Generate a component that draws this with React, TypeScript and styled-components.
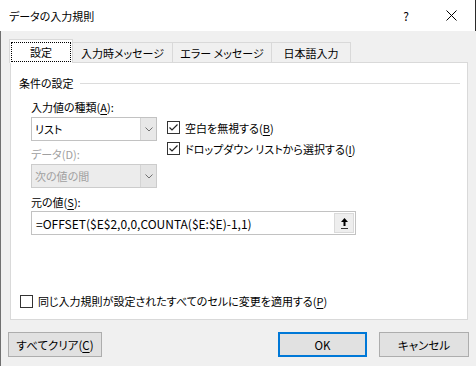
import styled, { createGlobalStyle } from 'styled-components';

const GlobalStyle = createGlobalStyle`
  html, body {
    margin: 0;
    padding: 0;
    background: #f0f0f0;
  }
  body {
    font-family: "Noto Sans CJK JP", "Noto Sans", sans-serif;
    font-size: 11px;
    color: #000;
    font-feature-settings: "palt";
  }
  * {
    box-sizing: border-box;
  }
`;

const Window = styled.div`
  width: 476px;
  height: 366px;
  display: flex;
  flex-direction: column;
  overflow: hidden;
`;

const TitleBar = styled.div`
  height: 31px;
  flex-shrink: 0;
  background: #fff;
  border-right: 1px solid #2b2b2b;
  display: flex;
  align-items: center;
  padding-left: 9px;
`;

const Title = styled.span`
  flex: 1;
  font-size: 11px;
`;

const HelpMark = styled.span`
  font-size: 12px;
  margin-right: 37px;
`;

const CloseMark = styled.svg`
  margin-right: 18px;
`;

const Body = styled.div`
  flex: 1;
  background: #f0f0f0;
  border-left: 1px solid #707070;
  padding: 8px 7px 0 8px;
  display: flex;
  flex-direction: column;
`;

const TabStrip = styled.div`
  display: flex;
  align-items: flex-end;
  height: 24px;
  margin-bottom: -1px;
  position: relative;
  z-index: 1;
`;

const Tab = styled.div<{ $active?: boolean; $width: number }>`
  width: ${p => p.$width}px;
  height: ${p => (p.$active ? 24 : 20)}px;
  margin-bottom: ${p => (p.$active ? 0 : 1)}px;
  margin-left: ${p => (p.$active ? 0 : -1)}px;
  background: ${p => (p.$active ? '#fff' : '#f0f0f0')};
  border: 1px solid #d9d9d9;
  border-bottom: none;
  display: flex;
  align-items: center;
  justify-content: center;
  padding: ${p => (p.$active ? '2px 1px 1px' : '0')};
`;

const FocusRect = styled.div`
  flex: 1;
  align-self: stretch;
  border: 1px dotted #000;
  display: flex;
  align-items: center;
  justify-content: center;
`;

const Panel = styled.div`
  width: 458px;
  height: 258px;
  margin-left: 1px;
  background: #fff;
  border: 1px solid #d9d9d9;
  display: flex;
  flex-direction: column;
  padding: 12px 7px 10px 0;
`;

const GroupHeader = styled.div`
  display: flex;
  align-items: center;
  height: 16px;
  padding-left: 8px;
  gap: 6px;

  &::after {
    content: '';
    flex: 1;
    height: 1px;
    background: #dcdcdc;
  }
`;

const Fields = styled.div`
  padding-left: 20px;
  display: flex;
  flex-direction: column;
`;

const FieldLabel = styled.div<{ $disabled?: boolean; $top: number }>`
  height: 16px;
  line-height: 16px;
  margin-top: ${p => p.$top}px;
  color: ${p => (p.$disabled ? '#a0a0a0' : '#000')};
`;

const Accel = styled.span`
  text-decoration: underline;
  text-underline-offset: 2px;
`;

const TypeRow = styled.div`
  display: flex;
  gap: 10px;
  margin-top: 2px;
`;

const LeftCol = styled.div`
  width: 126px;
  display: flex;
  flex-direction: column;
`;

const RightCol = styled.div`
  display: flex;
  flex-direction: column;
`;

const Combo = styled.div<{ $disabled?: boolean; $top?: number }>`
  height: 24px;
  margin-top: ${p => p.$top ?? 0}px;
  display: flex;
  border: 1px solid ${p => (p.$disabled ? '#cccccc' : '#c2c2c2')};
  background: ${p => (p.$disabled ? '#ececec' : '#fff')};
  color: ${p => (p.$disabled ? '#a0a0a0' : '#000')};
`;

const ComboText = styled.div`
  flex: 1;
  display: flex;
  align-items: center;
  padding-left: 3px;
`;

const ComboButton = styled.div<{ $disabled?: boolean }>`
  width: 16px;
  display: flex;
  align-items: center;
  justify-content: center;
  border-left: 1px solid #d4d4d4;
  background: ${p => (p.$disabled ? '#e4e4e4' : '#e8e8e8')};
`;

const CheckRow = styled.label`
  display: flex;
  align-items: center;
  height: 21px;
  gap: 5px;
`;

const BottomCheck = styled(CheckRow)`
  margin-top: auto;
  padding-left: 9px;
  height: 16px;
`;

const Box = styled.span`
  width: 13px;
  height: 13px;
  border: 1px solid #333;
  background: #fff;
  display: flex;
  align-items: center;
  justify-content: center;
`;

const SourceInput = styled.div`
  width: 325px;
  height: 24px;
  margin-top: 1px;
  display: flex;
  border: 1px solid #c2c2c2;
  background: #fff;
`;

const SourceText = styled.div`
  flex: 1;
  display: flex;
  align-items: center;
  padding-left: 4px;
  font-size: 12px;
`;

const RefButton = styled.div`
  width: 20px;
  margin: 1px;
  display: flex;
  align-items: center;
  justify-content: center;
  background: #eeeeee;
  border: 1px solid #dadada;
`;

const Footer = styled.div`
  display: flex;
  justify-content: space-between;
  margin: 12px 0 0 -1px;
`;

const ButtonGroup = styled.div`
  display: flex;
  gap: 12px;
`;

const Button = styled.button<{ $width: number; $default?: boolean }>`
  width: ${p => p.$width}px;
  height: 25px;
  padding: 0;
  font: inherit;
  font-size: 11.5px;
  font-feature-settings: "palt";
  color: #000;
  background: #e1e1e1;
  border: 1px solid ${p => (p.$default ? '#0078d7' : '#adadad')};
  box-shadow: ${p => (p.$default ? 'inset 0 0 0 1px #0078d7' : 'none')};
`;

const Check = () => (
  <svg width="11" height="11" viewBox="0 0 11 11">
    <polyline points="1.5,5.5 4,8 9.5,2.5" fill="none" stroke="#222" strokeWidth="1.2" />
  </svg>
);

const Chevron = () => (
  <svg width="8" height="5" viewBox="0 0 8 5">
    <polyline points="0.5,0.5 4,4 7.5,0.5" fill="none" stroke="#707070" strokeWidth="1" />
  </svg>
);

const CollapseIcon = () => (
  <svg width="7" height="11" viewBox="0 0 7 11">
    <polygon points="3.5,0 0,4 7,4" fill="#000" />
    <rect x="2.5" y="4" width="2" height="4" fill="#000" />
    <rect x="0" y="10" width="7" height="1" fill="#333" />
  </svg>
);

export default function App() {
  return (
    <>
      <GlobalStyle />
      <Window>
        <TitleBar>
          <Title>データの入力規則</Title>
          <HelpMark>?</HelpMark>
          <CloseMark width="11" height="11" viewBox="0 0 11 11">
            <line x1="0.5" y1="0.5" x2="10.5" y2="10.5" stroke="#000" strokeWidth="1" />
            <line x1="10.5" y1="0.5" x2="0.5" y2="10.5" stroke="#000" strokeWidth="1" />
          </CloseMark>
        </TitleBar>
        <Body>
          <TabStrip>
            <Tab $active $width={64}>
              <FocusRect>設定</FocusRect>
            </Tab>
            <Tab $width={101}>入力時メッセージ</Tab>
            <Tab $width={100}>エラー メッセージ</Tab>
            <Tab $width={80}>日本語入力</Tab>
          </TabStrip>
          <Panel>
            <GroupHeader>条件の設定</GroupHeader>
            <Fields>
              <FieldLabel $top={8}>
                入力値の種類(<Accel>A</Accel>):
              </FieldLabel>
              <TypeRow>
                <LeftCol>
                  <Combo>
                    <ComboText>リスト</ComboText>
                    <ComboButton>
                      <Chevron />
                    </ComboButton>
                  </Combo>
                  <FieldLabel $disabled $top={5}>
                    データ(D):
                  </FieldLabel>
                  <Combo $disabled $top={2}>
                    <ComboText>次の値の間</ComboText>
                    <ComboButton $disabled>
                      <Chevron />
                    </ComboButton>
                  </Combo>
                </LeftCol>
                <RightCol>
                  <CheckRow>
                    <Box>
                      <Check />
                    </Box>
                    <span>
                      空白を無視する(<Accel>B</Accel>)
                    </span>
                  </CheckRow>
                  <CheckRow>
                    <Box>
                      <Check />
                    </Box>
                    <span>
                      ドロップダウン リストから選択する(<Accel>I</Accel>)
                    </span>
                  </CheckRow>
                </RightCol>
              </TypeRow>
              <FieldLabel $top={6}>
                元の値(<Accel>S</Accel>):
              </FieldLabel>
              <SourceInput>
                <SourceText>=OFFSET($E$2,0,0,COUNTA($E:$E)-1,1)</SourceText>
                <RefButton>
                  <CollapseIcon />
                </RefButton>
              </SourceInput>
            </Fields>
            <BottomCheck>
              <Box />
              <span>
                同じ入力規則が設定されたすべてのセルに変更を適用する(<Accel>P</Accel>)
              </span>
            </BottomCheck>
          </Panel>
          <Footer>
            <Button $width={94}>
              すべてクリア(<Accel>C</Accel>)
            </Button>
            <ButtonGroup>
              <Button $width={89} $default>
                OK
              </Button>
              <Button $width={90}>キャンセル</Button>
            </ButtonGroup>
          </Footer>
        </Body>
      </Window>
    </>
  );
}
